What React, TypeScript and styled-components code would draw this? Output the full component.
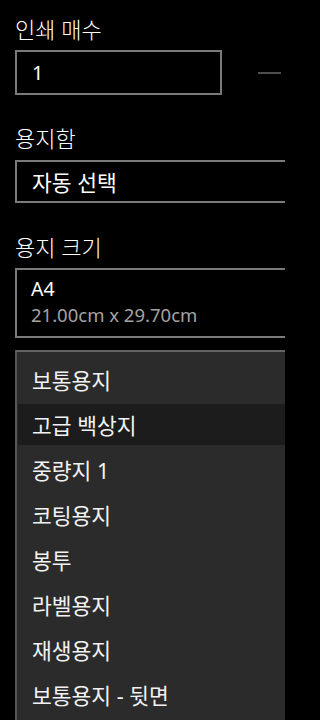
import React from "react";
import styled, { createGlobalStyle } from "styled-components";

const Global = createGlobalStyle`
  html, body {
    margin: 0;
    padding: 0;
    background: #000;
    overflow: hidden;
    width: 285px;
  }
  body {
    font-family: "Noto Sans", "Noto Sans CJK KR", sans-serif;
    color: #fff;
  }
`;

const Page = styled.div`
  width: 285px;
  height: 720px;
  overflow: hidden;
  padding: 15px 0 0 15px;
  box-sizing: border-box;
  display: flex;
  flex-direction: column;
`;

const Label = styled.div<{ $mt?: number }>`
  font-size: 22px;
  font-weight: 300;
  line-height: 28px;
  height: 28px;
  color: #fff;
  white-space: nowrap;
  margin-top: ${(p) => p.$mt ?? 0}px;
`;

const Row = styled.div<{ $mt: number }>`
  display: flex;
  align-items: center;
  width: 310px;
  flex: none;
  margin-top: ${(p) => p.$mt}px;
`;

const Box = styled.div<{ $w?: number; $h: number }>`
  box-sizing: border-box;
  width: ${(p) => (p.$w ? `${p.$w}px` : "100%")};
  height: ${(p) => p.$h}px;
  border: 2px solid #7a7a7a;
  padding-left: 15px;
  display: flex;
  flex-direction: column;
  justify-content: center;
  font-size: 21.5px;
  color: #fff;
  white-space: nowrap;
`;

const Digit = styled.span`
  font-size: 20px;
`;

const SizeBox = styled(Box)`
  justify-content: flex-start;
  padding-top: 6px;
  padding-left: 14px;
`;

const Line = styled.div<{ $muted?: boolean }>`
  line-height: 26px;
  font-size: ${(p) => (p.$muted ? "18.5px" : "19.5px")};
  color: ${(p) => (p.$muted ? "#a3a3a3" : "#fff")};
`;

const Dash = styled.div`
  width: 23px;
  height: 2px;
  background: #4e4e4e;
  margin-left: 36px;
  flex: none;
`;

const Dropdown = styled.div`
  margin-top: 12px;
  flex: 1;
  width: 310px;
  box-sizing: border-box;
  background: #2b2b2b;
  border-top: 2px solid #636363;
  border-left: 2px solid #565656;
  padding: 7px 0 0 1px;
  display: flex;
  flex-direction: column;
  gap: 4px;
`;

const Item = styled.div<{ $active?: boolean }>`
  height: 41px;
  flex: none;
  display: flex;
  align-items: center;
  padding-left: 14px;
  font-size: 21.5px;
  color: #f2f2f2;
  white-space: nowrap;
  background: ${(p) => (p.$active ? "#1c1c1c" : "transparent")};
`;

const items = [
  "보통용지",
  "고급 백상지",
  "중량지 1",
  "코팅용지",
  "봉투",
  "라벨용지",
  "재생용지",
  "보통용지 - 뒷면",
];

export default function App() {
  return (
    <>
      <Global />
      <Page>
        <Label>인쇄 매수</Label>
        <Row $mt={7}>
          <Box $w={207} $h={45}>
            <Digit>1</Digit>
          </Box>
          <Dash />
        </Row>
        <Label $mt={29}>용지함</Label>
        <Row $mt={8}>
          <Box $h={43}>자동 선택</Box>
        </Row>
        <Label $mt={30}>용지 크기</Label>
        <Row $mt={7}>
          <SizeBox $h={70}>
            <Line>A4</Line>
            <Line $muted>21.00cm x 29.70cm</Line>
          </SizeBox>
        </Row>
        <Dropdown>
          {items.map((t, i) => (
            <Item key={t} $active={i === 1}>
              {t}
            </Item>
          ))}
        </Dropdown>
      </Page>
    </>
  );
}
